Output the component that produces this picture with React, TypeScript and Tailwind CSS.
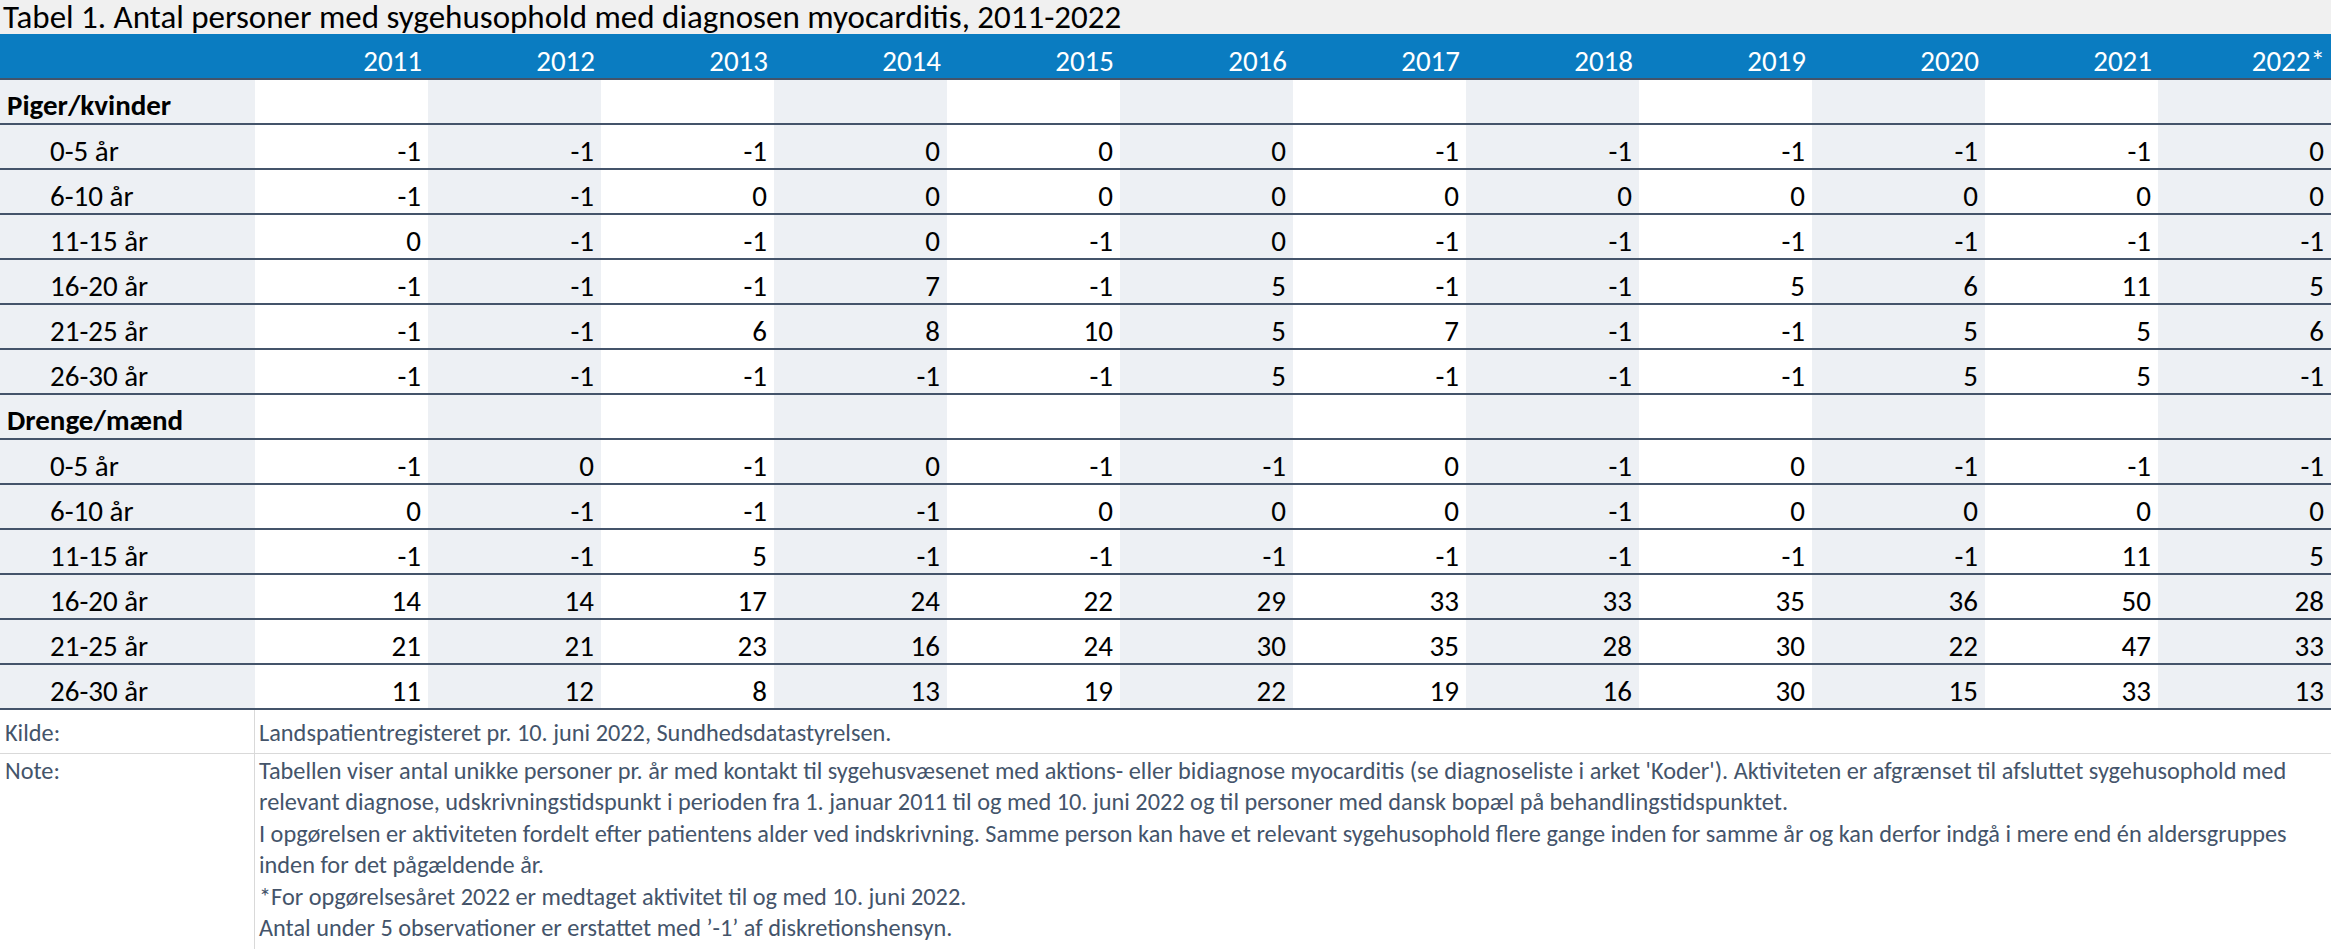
import React from "react";

const years = ["2011", "2012", "2013", "2014", "2015", "2016", "2017", "2018", "2019", "2020", "2021", "2022*"];

type Row = { label: string; values?: number[]; group?: boolean };

const rows: Row[] = [
  { label: "Piger/kvinder", group: true },
  { label: "0-5 år", values: [-1, -1, -1, 0, 0, 0, -1, -1, -1, -1, -1, 0] },
  { label: "6-10 år", values: [-1, -1, 0, 0, 0, 0, 0, 0, 0, 0, 0, 0] },
  { label: "11-15 år", values: [0, -1, -1, 0, -1, 0, -1, -1, -1, -1, -1, -1] },
  { label: "16-20 år", values: [-1, -1, -1, 7, -1, 5, -1, -1, 5, 6, 11, 5] },
  { label: "21-25 år", values: [-1, -1, 6, 8, 10, 5, 7, -1, -1, 5, 5, 6] },
  { label: "26-30 år", values: [-1, -1, -1, -1, -1, 5, -1, -1, -1, 5, 5, -1] },
  { label: "Drenge/mænd", group: true },
  { label: "0-5 år", values: [-1, 0, -1, 0, -1, -1, 0, -1, 0, -1, -1, -1] },
  { label: "6-10 år", values: [0, -1, -1, -1, 0, 0, 0, -1, 0, 0, 0, 0] },
  { label: "11-15 år", values: [-1, -1, 5, -1, -1, -1, -1, -1, -1, -1, 11, 5] },
  { label: "16-20 år", values: [14, 14, 17, 24, 22, 29, 33, 33, 35, 36, 50, 28] },
  { label: "21-25 år", values: [21, 21, 23, 16, 24, 30, 35, 28, 30, 22, 47, 33] },
  { label: "26-30 år", values: [11, 12, 8, 13, 19, 22, 19, 16, 30, 15, 33, 13] },
];

const noteLines = [
  "Tabellen viser antal unikke personer pr. år med kontakt til sygehusvæsenet med aktions- eller bidiagnose myocarditis (se diagnoseliste i arket 'Koder'). Aktiviteten er afgrænset til afsluttet sygehusophold med",
  "relevant diagnose, udskrivningstidspunkt i perioden fra 1. januar 2011 til og med 10. juni 2022 og til personer med dansk bopæl på behandlingstidspunktet.",
  "I opgørelsen er aktiviteten fordelt efter patientens alder ved indskrivning. Samme person kan have et relevant sygehusophold flere gange inden for samme år og kan derfor indgå i mere end én aldersgruppes",
  "inden for det pågældende år.",
  "*For opgørelsesåret 2022 er medtaget aktivitet til og med 10. juni 2022.",
  "Antal under 5 observationer er erstattet med ’-1’ af diskretionshensyn.",
];

export default function App() {
  return (
    <div
      className="w-[2331px] h-[949px] overflow-hidden bg-white flex flex-col text-black"
      style={{ fontFamily: "Carlito, Lato, 'Open Sans', sans-serif" }}
    >
      {/* Title */}
      <div className="h-[34px] shrink-0 bg-[#F0F0F0] pl-[3px] text-[33px] leading-[34px] whitespace-nowrap">
        Tabel 1. Antal personer med sygehusophold med diagnosen myocarditis, 2011-2022
      </div>

      {/* Header */}
      <div className="grid grid-cols-[255px_repeat(12,173px)] h-[46px] shrink-0 bg-[#0A7CC1] border-b-2 border-[#44546A] text-white text-[29px]">
        <div />
        {years.map((y) => (
          <div key={y} className="flex items-end justify-end pr-[6px] pb-[2px] leading-[30px]">
            {y}
          </div>
        ))}
      </div>

      {/* Body rows */}
      {rows.map((r, ri) => (
        <div
          key={ri}
          className="grid grid-cols-[255px_repeat(12,173px)] h-[45px] shrink-0 border-b-2 border-[#44546A] text-[29px] leading-[30px]"
        >
          <div
            className={
              r.group
                ? "bg-[#EDF0F4] flex items-end pl-[7px] pb-[3px] font-bold whitespace-nowrap"
                : "bg-[#EDF0F4] flex items-end pl-[50px] pb-[2px] whitespace-nowrap"
            }
          >
            {r.label}
          </div>
          {years.map((y, ci) => (
            <div
              key={y}
              className={
                ci % 2 === 0
                  ? "bg-white flex items-end justify-end pr-[7px] pb-[2px]"
                  : "bg-[#EDF0F4] flex items-end justify-end pr-[7px] pb-[2px]"
              }
            >
              {r.values ? r.values[ci] : ""}
            </div>
          ))}
        </div>
      ))}

      {/* Kilde */}
      <div className="grid grid-cols-[255px_1fr] h-[44px] shrink-0 border-b border-[#D9D9D9] text-[#44546A] text-[24.3px] leading-[31px]">
        <div className="border-r border-[#D9D9D9] pl-[5px] pt-[8px]">Kilde:</div>
        <div className="pl-[4px] pt-[8px] whitespace-nowrap">
          Landspatientregisteret pr. 10. juni 2022, Sundhedsdatastyrelsen.
        </div>
      </div>

      {/* Note */}
      <div className="grid grid-cols-[255px_1fr] flex-1 text-[#44546A] text-[24.3px] leading-[31.4px]">
        <div className="border-r border-[#D9D9D9] pl-[5px] pt-[2px]">Note:</div>
        <div className="pl-[4px] pt-[2px]">
          {noteLines.map((l, i) => (
            <div key={i} className="whitespace-nowrap">
              {l}
            </div>
          ))}
        </div>
      </div>
    </div>
  );
}
